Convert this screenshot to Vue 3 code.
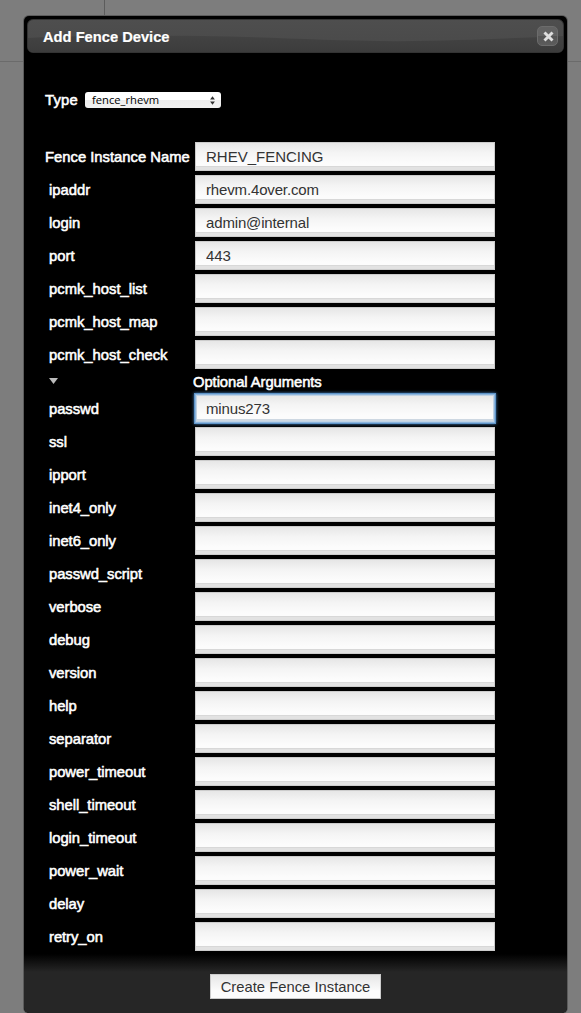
<script setup>
import { ref } from 'vue'

const required = ref([
  { name: 'Fence Instance Name', value: 'RHEV_FENCING', main: true },
  { name: 'ipaddr', value: 'rhevm.4over.com' },
  { name: 'login', value: 'admin@internal' },
  { name: 'port', value: '443' },
  { name: 'pcmk_host_list', value: '' },
  { name: 'pcmk_host_map', value: '' },
  { name: 'pcmk_host_check', value: '' },
])

const optional = ref([
  { name: 'passwd', value: 'minus273', focused: true },
  ...[
    'ssl', 'ipport', 'inet4_only', 'inet6_only', 'passwd_script', 'verbose', 'debug',
    'version', 'help', 'separator', 'power_timeout', 'shell_timeout', 'login_timeout',
    'power_wait', 'delay', 'retry_on',
  ].map((name) => ({ name, value: '' })),
])
</script>

<template>
  <div class="page">
    <div class="rule-v"></div>
    <div class="rule-h"></div>
    <section class="dialog">
      <header class="titlebar">
        <svg class="gloss" viewBox="0 0 537 34" preserveAspectRatio="none">
          <path d="M0 19C60 16 110 16 175 17C240 18 300 22 370 22.5C440 22 490 19 537 17V34H0Z" fill="url(#shade)" />
          <defs>
            <linearGradient id="shade" x1="0" y1="0" x2="0" y2="1">
              <stop offset="0" stop-color="#434343" />
              <stop offset="1" stop-color="#3c3c3c" />
            </linearGradient>
          </defs>
        </svg>
        <h1>Add Fence Device</h1>
        <button class="close" aria-label="Close">
          <svg width="11" height="11" viewBox="0 0 11 11">
            <path d="M2.5 2.5L8.5 8.5M8.5 2.5L2.5 8.5" stroke="#dedede" stroke-width="2.9" stroke-linecap="square" />
          </svg>
        </button>
      </header>

      <div class="body">
        <div class="type">
          <span class="label">Type</span>
          <div class="select">
            <span>fence_rhevm</span>
            <svg width="5" height="9" viewBox="0 0 5 9">
              <path d="M2.5 0.3L4.9 3.6H0.1ZM2.5 8.7L4.9 5.4H0.1Z" fill="#333" />
            </svg>
          </div>
        </div>

        <div v-for="f in required" :key="f.name" class="row">
          <label class="label" :class="{ main: f.main }">{{ f.name }}</label>
          <input v-model="f.value" type="text" spellcheck="false" :class="{ main: f.main }" />
        </div>
        <div class="optional">
          <svg width="9" height="6" viewBox="0 0 9 6"><path d="M0 0H9L4.5 6Z" fill="#bbb" /></svg>
          <span class="label">Optional Arguments</span>
        </div>
        <div v-for="f in optional" :key="f.name" class="row extra">
          <label class="label">{{ f.name }}</label>
          <input v-model="f.value" type="text" spellcheck="false" :class="{ focused: f.focused }" />
        </div>
      </div>

      <footer>
        <button class="create">Create Fence Instance</button>
      </footer>
    </section>
  </div>
</template>

<style>
body {
  margin: 0;
  overflow: hidden;
}
</style>

<style scoped>
* {
  box-sizing: border-box;
}
.page {
  position: relative;
  height: 1013px;
  padding: 16px 14px 0 24px;
  overflow: hidden;
  background: #7d7d7d;
  font-family: "Liberation Sans", Arial, sans-serif;
}
.rule-v {
  position: absolute;
  left: 104px;
  top: 0;
  width: 1px;
  height: 16px;
  background: #5c5c5c;
}
.rule-h {
  position: absolute;
  left: 0;
  top: 61px;
  width: 100%;
  height: 1px;
  background: #6b6b6b;
}
.dialog {
  position: relative;
  display: flex;
  flex-direction: column;
  height: 997px;
  padding-top: 3px;
  border-radius: 5px;
  background: #000;
  box-shadow: 0 0 0 1px #5c5c5c;
  overflow: hidden;
}
.titlebar {
  position: relative;
  display: flex;
  flex: none;
  align-items: center;
  justify-content: space-between;
  width: 537px;
  height: 34px;
  margin-left: 3px;
  padding: 0 6px 0 16px;
  border: 1px solid #333;
  border-radius: 6px;
  overflow: hidden;
  background: linear-gradient(#4e4e4e, #494949);
}
.gloss {
  position: absolute;
  inset: 0;
  width: 100%;
  height: 100%;
}
h1 {
  position: relative;
  margin: 1px 0 0 -1px;
  color: #fff;
  font-size: 14.7px;
  line-height: 18px;
  -webkit-text-stroke: 0.2px #fff;
}
.close {
  position: relative;
  display: flex;
  align-items: center;
  justify-content: center;
  width: 21px;
  height: 20px;
  margin-right: -1px;
  padding: 0 0 0 2px;
  border: 1px solid #6c6c6c;
  border-radius: 5px;
  background: linear-gradient(#626262 50%, #545454 50%, #5c5c5c);
}
.body {
  padding: 39px 0 0 21px;
}
.label {
  color: #fff;
  font-size: 14.8px;
  line-height: 18px;
  -webkit-text-stroke: 0.55px #fff;
}
.type {
  display: flex;
  align-items: flex-start;
  height: 50px;
}
.type .label {
  width: 40px;
  margin-top: -1px;
  letter-spacing: 0.2px;
}
.select {
  display: flex;
  align-items: center;
  justify-content: space-between;
  width: 136px;
  height: 16px;
  padding: 0 6px 0 7px;
  border-radius: 3px;
  background: linear-gradient(#fff 50%, #ededed 50%, #f2f2f2);
  color: #000;
  font: 11.2px/16px "Open Sans", sans-serif;
}
.row {
  display: flex;
  height: 33px;
}
.row .label {
  width: 150px;
  padding: 6px 0 0 4px;
  white-space: nowrap;
}
.row .label.main {
  padding-left: 0;
}
.extra .label {
  letter-spacing: -0.05px;
}
input {
  width: 300px;
  height: 29px;
  margin: 0;
  padding: 0 10px 1px;
  border: 1px solid #ccc;
  border-radius: 0;
  outline: none;
  background: linear-gradient(#e6e6e6, #f4f4f4 35%, #fcfcfc 75%, #fcfcfc);
  box-shadow: inset 0 -3px #e2e2e2, inset 0 -4px #d8d8d8;
  color: #333;
  font: 15px "Liberation Sans", Arial, sans-serif;
  letter-spacing: -0.15px;
}
input.main {
  letter-spacing: 0;
}
input.focused {
  border-color: #8db5dc;
  box-shadow: inset 0 0 0 1px #bfd2e4, inset 0 -3px #ced8e2, 0 0 0 1px #5e94c8, 0 0 3px 1px #4682bd;
}
.optional {
  display: flex;
  height: 21px;
}
.optional svg {
  margin: 5px 0 0 4px;
}
.optional .label {
  margin-left: 135px;
  letter-spacing: -0.07px;
}
footer {
  display: flex;
  flex: 1;
  align-items: flex-start;
  justify-content: center;
  margin-top: -1px;
  padding-top: 20px;
  background: linear-gradient(#000, #262626 18px);
}
.create {
  width: 171px;
  height: 25px;
  padding: 0;
  border: 1px solid #ccc;
  background: linear-gradient(#e6e6e6, #fcfcfc 70%);
  color: #333;
  font: 14.8px "Liberation Sans", Arial, sans-serif;
}
</style>
